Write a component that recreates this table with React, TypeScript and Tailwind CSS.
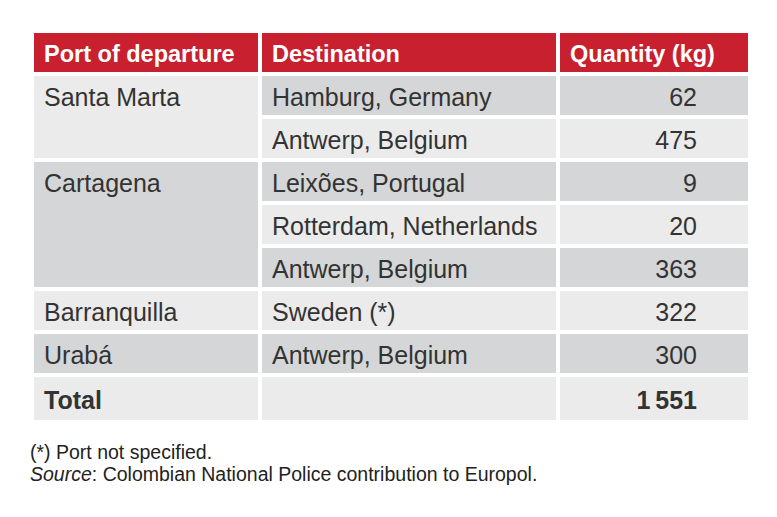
import React from "react";

const light = "bg-[#ebebec]";
const dark = "bg-[#d5d6d7]";

interface Row {
  dest: string;
  qty: string;
  shade: string;
}

const rows: Row[] = [
  { dest: "Hamburg, Germany", qty: "62", shade: dark },
  { dest: "Antwerp, Belgium", qty: "475", shade: light },
  { dest: "Leixões, Portugal", qty: "9", shade: dark },
  { dest: "Rotterdam, Netherlands", qty: "20", shade: light },
  { dest: "Antwerp, Belgium", qty: "363", shade: dark },
  { dest: "Sweden (*)", qty: "322", shade: light },
  { dest: "Antwerp, Belgium", qty: "300", shade: dark },
];

const ports = [
  { name: "Santa Marta", span: "row-span-2", shade: light },
  { name: "Cartagena", span: "row-span-3", shade: dark },
  { name: "Barranquilla", span: "row-span-1", shade: light },
  { name: "Urabá", span: "row-span-1", shade: dark },
];

const cell = "flex items-center px-[10px] pt-[4px] text-[25px] text-[#333] leading-none";
const head = "bg-[#c8202f] flex items-center px-[10px] pt-[4px] text-white text-[23.5px] font-bold leading-none";

const App: React.FC = () => {
  return (
    <div
      className="w-[777px] h-[517px] bg-white pt-[33px] pl-[34px]"
      style={{ fontFamily: '"Liberation Sans", Arial, sans-serif' }}
    >
      <div className="grid grid-cols-[224px_294px_188px] grid-rows-[39px_repeat(7,39px)_43px] gap-1 grid-flow-col">
        {/* column 1 */}
        <div className={head}>Port of departure</div>
        {ports.map((p) => (
          <div key={p.name} className={`${p.span} ${p.shade} flex items-start pt-[9px] px-[10px] text-[25px] text-[#333] leading-[25px]`}>
            {p.name}
          </div>
        ))}
        <div className={`${light} ${cell} font-bold text-[#222]`}>Total</div>

        {/* column 2 */}
        <div className={head}>Destination</div>
        {rows.map((r, i) => (
          <div key={i} className={`${r.shade} ${cell}`}>
            {r.dest}
          </div>
        ))}
        <div className={light} />

        {/* column 3 */}
        <div className={head}>Quantity (kg)</div>
        {rows.map((r, i) => (
          <div key={i} className={`${r.shade} ${cell} justify-end pr-[51px]`}>
            {r.qty}
          </div>
        ))}
        <div className={`${light} ${cell} justify-end pr-[51px] font-bold text-[#222]`}>1&#8201;551</div>
      </div>

      <div className="mt-[21px] -ml-[4px] text-[19.5px] leading-[22px] text-[#222]">
        <p>(*) Port not specified.</p>
        <p>
          <span className="italic">Source</span>: Colombian National Police contribution to Europol.
        </p>
      </div>
    </div>
  );
};

export default App;
